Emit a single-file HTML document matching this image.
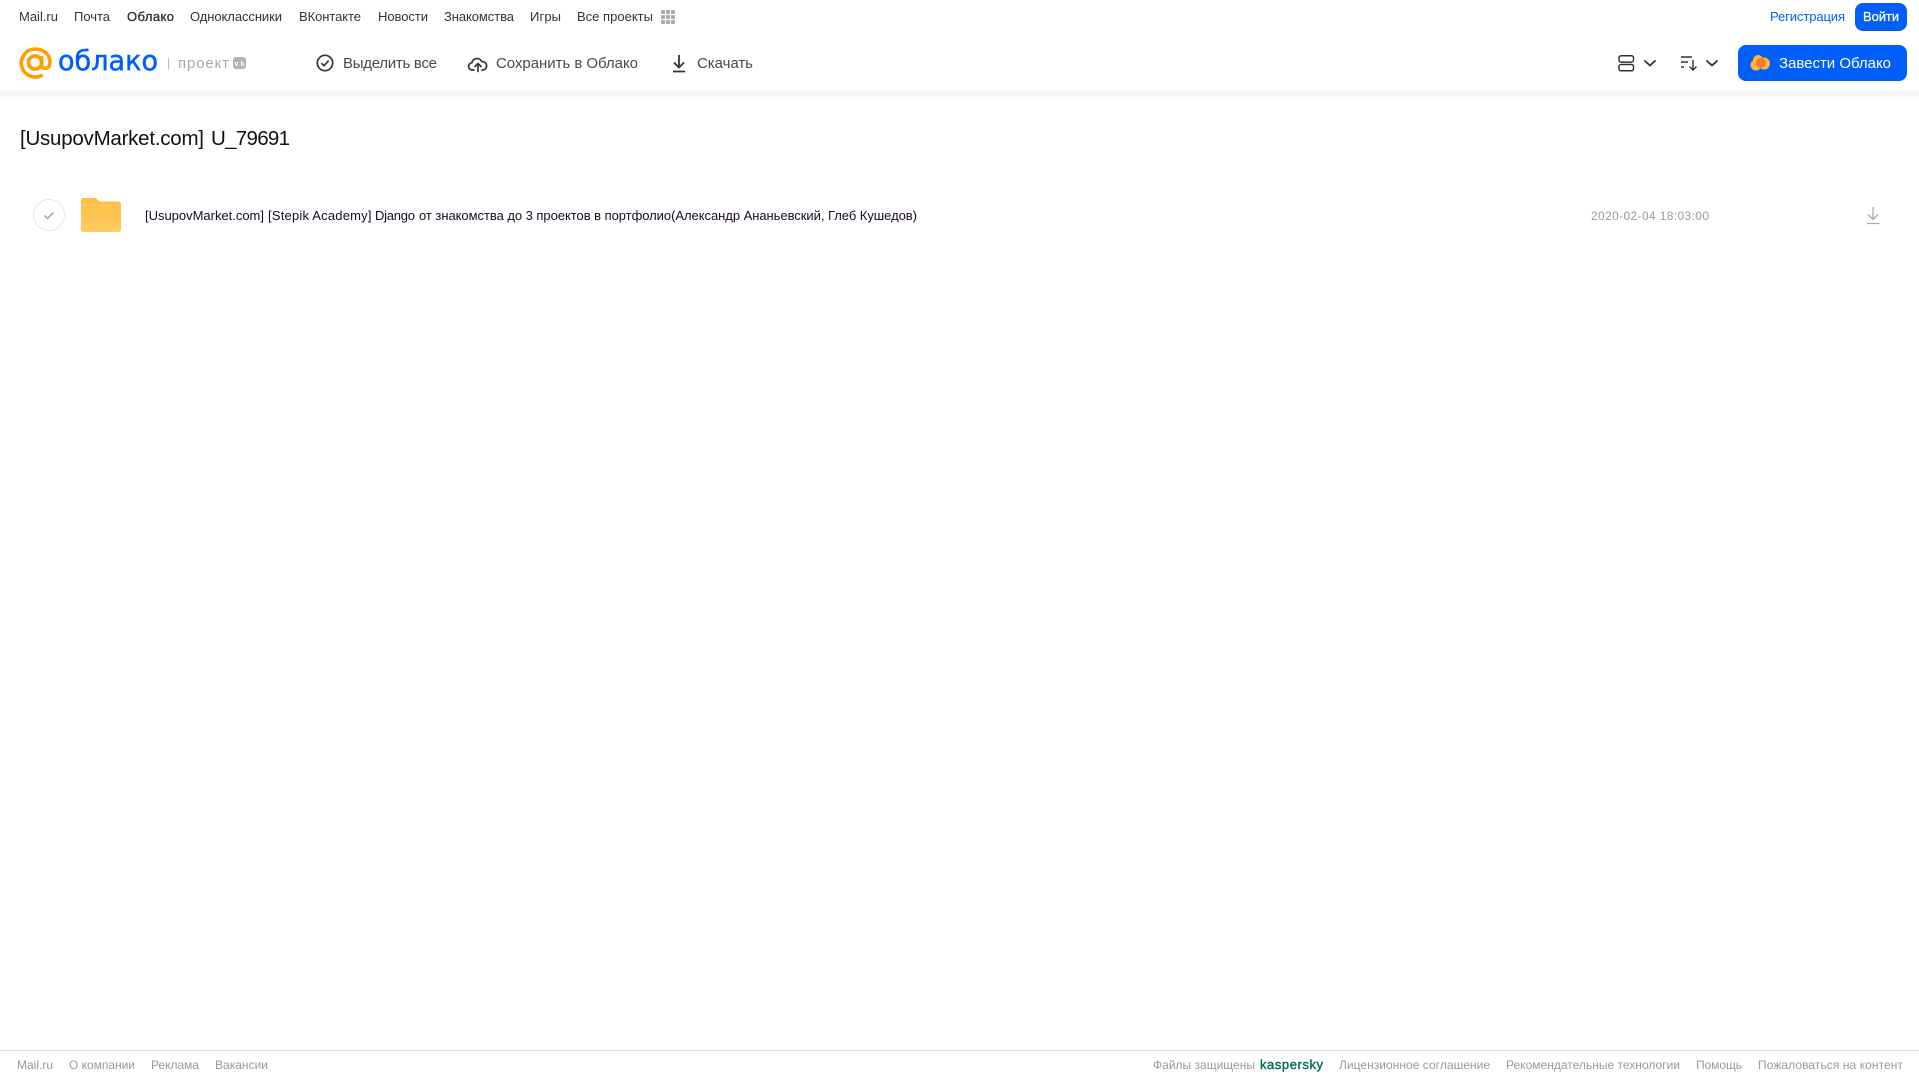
<!DOCTYPE html>
<html lang="ru"><head><meta charset="utf-8"><title>Облако</title>
<style>
html,body{margin:0;padding:0;background:#fff;width:1919px;height:1079px;overflow:hidden}
svg{display:block}
text{font-family:"Liberation Sans",sans-serif}
.n{font-size:13px;fill:#333}
.a{font-size:15px;fill:#4a4a4a}
.f{font-size:12px;fill:#999}
.r{font-size:13px;fill:#1a0a22}
.t{font-size:20.500px;fill:#111}
</style></head><body>
<svg width="1919" height="1079" viewBox="0 0 1919 1079" xmlns="http://www.w3.org/2000/svg">
<defs>
<linearGradient id="sh" x1="0" y1="0" x2="0" y2="1"><stop offset="0" stop-color="#f4f4f4"/><stop offset="1" stop-color="#fff"/></linearGradient>
<linearGradient id="fo" x1="0" y1="0" x2="0" y2="1"><stop offset="0" stop-color="#ffbe3f"/><stop offset="1" stop-color="#ffcb62"/></linearGradient>
</defs>
<rect x="0" y="91" width="1919" height="10" fill="url(#sh)"/>

<!-- top nav -->
<text class="n" x="19" y="21" textLength="39">Mail.ru</text>
<text class="n" x="74" y="21" textLength="36">Почта</text>
<text class="n" x="127" y="21" textLength="47" style="stroke:#333;stroke-width:.35">Облако</text>
<text class="n" x="190" y="21" textLength="92">Одноклассники</text>
<text class="n" x="299" y="21" textLength="62">ВКонтакте</text>
<text class="n" x="378" y="21" textLength="50">Новости</text>
<text class="n" x="444" y="21" textLength="70">Знакомства</text>
<text class="n" x="530" y="21" textLength="31">Игры</text>
<text class="n" x="577" y="21" textLength="76">Все проекты</text>
<g fill="#aaa">
<rect x="661" y="10" width="4" height="4" rx="1"/><rect x="666" y="10" width="4" height="4" rx="1"/><rect x="671" y="10" width="4" height="4" rx="1"/>
<rect x="661" y="15" width="4" height="4" rx="1"/><rect x="666" y="15" width="4" height="4" rx="1"/><rect x="671" y="15" width="4" height="4" rx="1"/>
<rect x="661" y="20" width="4" height="4" rx="1"/><rect x="666" y="20" width="4" height="4" rx="1"/><rect x="671" y="20" width="4" height="4" rx="1"/>
</g>
<text x="1770" y="21" textLength="75" style="font-size:13px;fill:#005ff9">Регистрация</text>
<rect x="1855" y="3" width="52" height="28" rx="8" fill="#005ff9"/>
<text x="1863" y="21" textLength="36" style="font-size:13px;fill:#fff;stroke:#fff;stroke-width:.3">Войти</text>

<!-- logo -->
<g fill="none" stroke="#ff9e00" stroke-width="3.6">
<circle cx="35" cy="62.500" r="6.600"/>
<path d="M41.600 56v8.500c0 5 6.900 5 8 0.500 2-8.500-4.500-16-14.600-16a14 14 0 1 0 7.500 26"/>
</g>
<text x="58" y="70" textLength="100" lengthAdjust="spacingAndGlyphs" style='font-family:"DejaVu Sans",sans-serif;font-size:28px;fill:#005ff9;stroke:#005ff9;stroke-width:.5'>облако</text>
<rect x="168" y="58" width="1" height="11" fill="#bbb"/>
<text x="178" y="68" textLength="51" style='font-size:15px;fill:#aaa'>проект</text>
<rect x="233" y="57" width="13" height="12" rx="3" fill="#b2b2b2"/>
<text x="234.500" y="66" textLength="10" style="font-size:7px;fill:#fff" font-weight="700">vk</text>

<!-- actions -->
<g fill="none" stroke="#333" stroke-width="1.700">
<circle cx="325" cy="63" r="7.700"/>
<path d="M321.500 63.200l2.500 2.500 4.600-5"/>
</g>
<text class="a" x="343" y="68" textLength="94">Выделить все</text>
<g fill="none" stroke="#333" stroke-width="1.700" stroke-linecap="round" stroke-linejoin="round">
<path d="M474 70h-1.500a3.600 3.600 0 0 1-.6-7.200 5.200 5.200 0 0 1 9.900-1.100 4.100 4.100 0 0 1 1.300 8.300H482"/>
<path d="M478 71.500V63.500M475 66.500l3-3 3 3"/>
</g>
<text class="a" x="496" y="68" textLength="142">Сохранить в Облако</text>
<g fill="none" stroke="#333" stroke-width="1.800">
<path d="M679 55v12M674 62.500l5 5 5-5M673 71.500h12"/>
</g>
<text class="a" x="697" y="68" textLength="56">Скачать</text>

<!-- view icons -->
<g fill="none" stroke="#333" stroke-width="1.500">
<rect x="1619" y="55.800" width="14.500" height="6.300" rx="2"/>
<rect x="1619" y="64.500" width="14.500" height="6.300" rx="2"/>
<path d="M1645 61l5 4.500 5-4.500" stroke-linecap="round" stroke-width="1.800"/>
<path d="M1681 57h11M1681 62h7M1681 67h3" stroke-width="1.400"/>
<path d="M1693 60v9.500M1689.500 66.500l3.500 3.500 3.500-3.500" stroke-width="1.400"/>
<path d="M1707 61l5 4.500 5-4.500" stroke-linecap="round" stroke-width="1.800"/>
</g>

<!-- CTA -->
<rect x="1738" y="45" width="169" height="36" rx="8" fill="#005ff9"/>
<circle cx="1756" cy="65" r="5.500" fill="#ffb73b"/>
<circle cx="1758" cy="60" r="5" fill="#ffb73b"/>
<circle cx="1764" cy="63.500" r="6" fill="#ffb73b"/>
<circle cx="1761" cy="63" r="5" fill="#f4792b"/>
<text x="1779" y="68" textLength="112" style="font-size:15px;fill:#fff">Завести Облако</text>

<!-- title -->
<text class="t" x="20" y="145" textLength="184">[UsupovMarket.com]</text>
<text class="t" x="211" y="145" textLength="79">U_79691</text>

<!-- row -->
<circle cx="49" cy="215" r="15.500" fill="#fff" stroke="#e6e6e6"/>
<path d="M44.500 215.500l3 3 6-6" fill="none" stroke="#999" stroke-width="1.400"/>
<path d="M81 200.500a2.500 2.500 0 0 1 2.500-2.500h10.500c3.500 0 4 3.500 7 3.500h17.500a2.500 2.500 0 0 1 2.500 2.500v25.500a2.500 2.500 0 0 1-2.500 2.500h-35a2.500 2.500 0 0 1-2.500-2.500z" fill="url(#fo)"/>
<rect x="81" y="204.500" width="40" height="1" fill="#ffd27a" opacity=".7"/>
<text class="r" x="145" y="220" textLength="119">[UsupovMarket.com]</text>
<text class="r" x="268" y="220" textLength="103.500">[Stepik Academy]</text>
<text class="r" x="375" y="220" textLength="40">Django</text>
<text class="r" x="419" y="220" textLength="498">от знакомства до 3 проектов в портфолио(Александр Ананьевский, Глеб Кушедов)</text>
<text x="1591" y="220" textLength="118" style="font-size:12px;fill:#999">2020-02-04 18:03:00</text>
<g fill="none" stroke="#aaa" stroke-width="1.300"><path d="M1873 207v12M1868 214.500l5 5 5-5M1867 223.500h12.500"/></g>

<!-- footer -->
<rect x="0" y="1050" width="1919" height="1" fill="#dcdcdc"/>
<text class="f" x="17" y="1069" textLength="36">Mail.ru</text>
<text class="f" x="69" y="1069" textLength="66">О компании</text>
<text class="f" x="151" y="1069" textLength="48">Реклама</text>
<text class="f" x="215" y="1069" textLength="53">Вакансии</text>
<text class="f" x="1153" y="1069" textLength="102">Файлы защищены</text>
<text x="1260" y="1069" textLength="63" style="font-size:13px;fill:#006d5c;stroke:#006d5c;stroke-width:.4">kaspersky</text>
<text class="f" x="1339" y="1069" textLength="151">Лицензионное соглашение</text>
<text class="f" x="1506" y="1069" textLength="174">Рекомендательные технологии</text>
<text class="f" x="1696" y="1069" textLength="46">Помощь</text>
<text class="f" x="1758" y="1069" textLength="145">Пожаловаться на контент</text>
</svg>
</body></html>
